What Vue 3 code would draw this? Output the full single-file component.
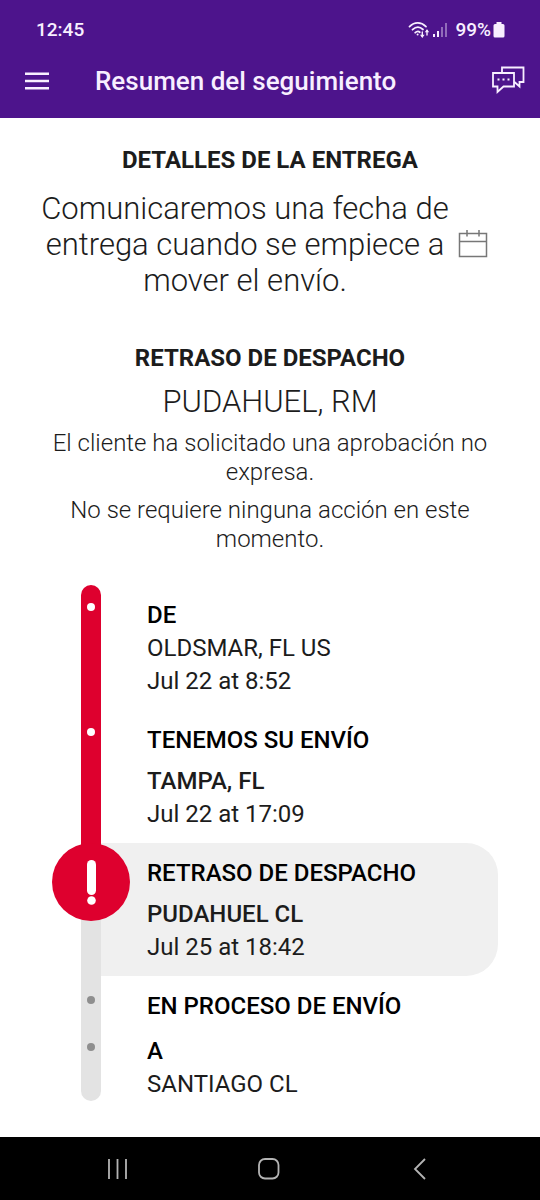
<script setup>
const events = [
  { title: 'DE', lines: ['OLDSMAR, FL US', 'Jul 22 at 8:52'], state: 'done', tight: true },
  { title: 'TENEMOS SU ENVÍO', lines: ['TAMPA, FL', 'Jul 22 at 17:09'], state: 'done', medium: true },
  { title: 'RETRASO DE DESPACHO', lines: ['PUDAHUEL CL', 'Jul 25 at 18:42'], state: 'alert', medium: true },
  { title: 'EN PROCESO DE ENVÍO', lines: [], state: 'pending', tight: true },
  { title: 'A', lines: ['SANTIAGO CL'], state: 'pending', tight: true, last: true }
]
</script>

<template>
  <div class="screen">
    <header class="top">
      <div class="status">
        <span>12:45</span>
        <div class="status-icons">
          <svg class="wifi" width="22" height="18" viewBox="0 0 22 18" fill="none" stroke="currentColor" stroke-width="1.8" stroke-linecap="round">
            <path d="M1.5 5.6C6.5.7 13 .7 18 5.6M4.5 8.7c3.5-3.3 7.2-3.3 10.5-.2M7.2 11.7c1.7-1.5 3.3-1.6 4.6-.5" />
            <circle cx="9.6" cy="13.6" r="1" fill="currentColor" stroke="none" />
            <path d="M14.3 11v4.5M19 14v-4.5" stroke-width="1.4" />
            <path d="M12 13.8h4.6L14.3 17zM16.8 11.3h4.4L19 8.3z" fill="currentColor" stroke="none" />
          </svg>
          <svg class="signal" width="16" height="16" viewBox="0 0 16 16" fill="currentColor">
            <path d="M1 12h2v3H1zM5 9h2v6H5z" />
            <path d="M9 5h2v10H9zM13 1h2v14h-2z" opacity=".4" />
          </svg>
          <span class="percent">99%</span>
          <svg class="battery" width="12" height="16" viewBox="0 0 12 16" fill="currentColor">
            <path d="M3.5 0h5v2H10q1.500 0 1.500 1.500v10.500q0 1.500-1.500 1.500H2Q.5 15.500.5 14V3.500Q.5 2 2 2h1.500z" />
          </svg>
        </div>
      </div>
      <div class="bar">
        <button class="icon-button" type="button" aria-label="Menú">
          <svg width="24" height="18" viewBox="0 0 24 18" fill="currentColor">
            <path d="M0 .5h24V3H0zM0 7.700h24v2.500H0zM0 15h24v2.500H0z" />
          </svg>
        </button>
        <h1>Resumen del seguimiento</h1>
        <button class="icon-button" type="button" aria-label="Chat">
          <svg width="34" height="30" viewBox="0 0 34 30" fill="none" stroke="currentColor" stroke-width="1.8">
            <path d="M11 7V1.500h21.500V16h-4v4.500L24 16.500h-1" />
            <path d="M2 7h21v13.500H12.500l-6 5.500v-5.500H2z" />
            <path d="M6.500 13.500h2M11.500 13.500h2M16.500 13.500h2" stroke-width="2" />
          </svg>
        </button>
      </div>
    </header>

    <main>
      <section class="delivery">
        <h2>DETALLES DE LA ENTREGA</h2>
        <div class="estimate">
          <p>Comunicaremos una fecha de entrega cuando se empiece a mover el envío.</p>
          <svg width="30" height="30" viewBox="0 0 30 30" fill="none" stroke="#777" stroke-width="1.500">
            <path d="M1.500 3.500h27v23h-27zM1.500 11.500h27M9 0v6.500M21 0v6.500" />
          </svg>
        </div>
      </section>

      <section class="delay">
        <h2>RETRASO DE DESPACHO</h2>
        <p class="place">PUDAHUEL, RM</p>
        <p class="note">El cliente ha solicitado una aprobación no expresa.</p>
        <p class="note">No se requiere ninguna acción en este momento.</p>
      </section>

      <ol class="timeline">
        <li v-for="event in events" :key="event.title" :class="['event', event.state, { tight: event.tight, medium: event.medium, last: event.last }]">
          <div class="rail">
            <svg v-if="event.state === 'alert'" class="alert-mark" width="78" height="78" viewBox="1 1 78 78" role="img" aria-label="Retraso">
              <circle cx="40" cy="40" r="39" fill="#de002e" />
              <rect x="36" y="18" width="9" height="35" rx="4.500" fill="#fff" />
              <circle cx="40.500" cy="58.500" r="4.300" fill="#fff" />
            </svg>
            <span v-else class="dot"></span>
          </div>
          <div class="details">
            <h3>{{ event.title }}</h3>
            <p v-for="line in event.lines" :key="line">{{ line }}</p>
          </div>
        </li>
      </ol>
    </main>

    <nav class="system-nav" aria-label="Sistema">
      <button type="button" aria-label="Recientes">
        <svg width="24" height="24" viewBox="0 0 24 24" fill="none" stroke="currentColor" stroke-width="1.800">
          <path d="M3 2v20M11.500 2v20M20 2v20" />
        </svg>
      </button>
      <button type="button" aria-label="Inicio">
        <svg width="24" height="24" viewBox="0 0 24 24" fill="none" stroke="currentColor" stroke-width="1.800">
          <rect x="2" y="2" width="19.500" height="19.500" rx="6" />
        </svg>
      </button>
      <button type="button" aria-label="Atrás">
        <svg width="24" height="24" viewBox="0 0 24 24" fill="none" stroke="currentColor" stroke-width="1.800">
          <path d="M17 2 7 12l10 10" />
        </svg>
      </button>
    </nav>
  </div>
</template>

<style>
body {
  margin: 0;
  background: #fff;
}
</style>

<style scoped>
.screen {
  display: flex;
  flex-direction: column;
  min-height: 100vh;
  font-family: Roboto, "Noto Sans", sans-serif;
  color: #1c1c1c;
}
h1, h2, h3, p, ol {
  margin: 0;
  padding: 0;
}
button {
  display: flex;
  padding: 0;
  border: 0;
  background: none;
  color: inherit;
}
svg {
  display: block;
  flex: none;
}
.top {
  background: #4d148c;
  color: #f8efff;
}
.status {
  display: flex;
  justify-content: space-between;
  align-items: center;
  padding: 16px 35px 0 36px;
  font-size: 19px;
  font-weight: 500;
  line-height: 28px;
}
.status-icons {
  display: flex;
  align-items: center;
}
.signal {
  margin: 0 7px 0 2px;
}
.battery {
  margin-left: 2px;
}
.bar {
  display: flex;
  align-items: center;
  height: 74px;
  padding: 0 15px 0 25px;
}
.bar h1 {
  flex: 1;
  padding-left: 46px;
  font-size: 26px;
  font-weight: 500;
}
main {
  flex: 1;
}
h2 {
  font-size: 24px;
  font-weight: 700;
  line-height: 32px;
  text-align: center;
}
.delivery {
  padding: 26px 40px 0;
}
.estimate {
  display: flex;
  align-items: center;
  justify-content: center;
  gap: 8px;
  padding: 15px 12px 0 0;
}
.estimate p {
  max-width: 410px;
}
.estimate p,
.place {
  font-size: 31px;
  font-weight: 300;
  line-height: 36px;
  text-align: center;
}
.delay {
  padding: 43px 40px 0;
}
.place {
  padding-top: 10px;
}
.note {
  padding-top: 9px;
  font-size: 24px;
  font-weight: 300;
  line-height: 29px;
  text-align: center;
}
.timeline {
  padding: 31px 42px 35px 81px;
  list-style: none;
}
.event {
  display: flex;
}
.rail {
  position: relative;
  display: flex;
  flex: none;
  flex-direction: column;
  align-items: center;
  width: 20px;
  background: #e3e3e3;
}
.done .rail {
  background: #de002e;
}
.alert .rail {
  background: linear-gradient(#de002e 30px, #e3e3e3 30px);
}
.event:first-child .rail {
  border-radius: 10px 10px 0 0;
}
.last .rail {
  border-radius: 0 0 10px 10px;
}
.dot {
  width: 8px;
  height: 8px;
  margin-top: 18px;
  border-radius: 50%;
  background: #8e8e8e;
}
.done .dot {
  background: #fff;
}
.pending .dot {
  margin-top: 20px;
}
.last .dot {
  margin-top: 8px;
}
.details {
  flex: 1;
  padding: 14px 0 12px 46px;
  font-size: 24px;
  line-height: 33px;
}
.alert .details {
  border-radius: 0 32px 32px 0;
  background: #f0f0f0;
}
.last .details {
  padding-top: 0;
  padding-bottom: 0;
}
h3 {
  padding-bottom: 8px;
  color: #000;
  font-size: 24px;
  font-weight: 500;
}
.tight h3 {
  padding-bottom: 0;
}
.medium h3 + p {
  font-weight: 500;
}
.system-nav {
  display: flex;
  align-items: center;
  justify-content: space-around;
  height: 63px;
  padding: 0 44px 0 42px;
  background: #000;
  color: #b4b4b4;
}
</style>
